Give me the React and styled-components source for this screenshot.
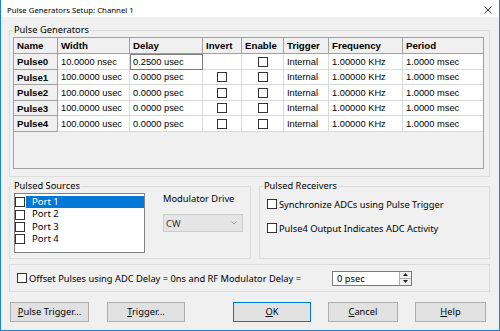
import React from "react";
import styled, { createGlobalStyle } from "styled-components";

const UI_FONT = `"Noto Sans", "Open Sans", sans-serif`;
const GRID_FONT = `"Liberation Sans", Arial, sans-serif`;

const GlobalStyle = createGlobalStyle`
  html, body { margin: 0; padding: 0; background: #f0f0f0; }
  body { width: 500px; height: 331px; overflow: hidden; }
  * { box-sizing: border-box; }
`;

const Window = styled.div`
  width: 500px;
  height: 331px;
  border: 1px solid #1883d7;
  border-top: none;
  background: #f0f0f0;
  display: flex;
  flex-direction: column;
  font-family: ${UI_FONT};
  font-size: 9.3px;
  color: #000;
  overflow: hidden;
`;

const TitleBar = styled.div`
  flex: 0 0 17px;
  height: 17px;
  background: #fff;
  display: flex;
  align-items: center;
  justify-content: space-between;
  padding: 3px 7px 0 6px;
  font-size: 7.8px;
  line-height: 10px;
`;

const Body = styled.div`
  flex: 1;
  display: flex;
  flex-direction: column;
  padding: 7px 9px 0 8px;
`;

const Group = styled.fieldset`
  margin: 0;
  padding: 0;
  border: 1px solid #dcdcdc;
  min-width: 0;
  width: ${(p) => (p.$width ? `${p.$width}px` : "auto")};
  flex: ${(p) => (p.$grow ? "1 1 auto" : "0 0 auto")};
`;

const Legend = styled.legend`
  margin-left: 3px;
  padding: 0 1px;
  line-height: 12px;
  font-size: 9.3px;
`;

const GenContent = styled.div`
  padding: 1px 5px 7px 3px;
`;

const Grid = styled.div`
  display: grid;
  grid-template-columns: 44px 72px 73px 39px 42px 45px 74px 1fr;
  grid-template-rows: 16px 16px 15px 16px 15px 16px;
  align-content: start;
  height: 132px;
  border: 1px solid #a0a0a0;
  background: #f0f0f0;
  font-family: ${GRID_FONT};
  font-size: 9.3px;
`;

const HeadCell = styled.div`
  background: #f0f0f0;
  border-right: ${(p) => (p.$last ? "none" : "1px solid #a0a0a0")};
  border-bottom: 1px solid #a0a0a0;
  font-weight: bold;
  font-size: 9.7px;
  display: flex;
  align-items: center;
  padding-left: 3px;
  white-space: nowrap;
  overflow: hidden;
`;

const DataCell = styled.div`
  background: #fff;
  border-right: ${(p) => (p.$last ? "none" : "1px solid #dadada")};
  border-bottom: 1px solid #dadada;
  display: flex;
  align-items: center;
  justify-content: ${(p) => (p.$center ? "center" : "flex-start")};
  padding-left: ${(p) => (p.$center ? "0" : "3px")};
  white-space: nowrap;
  overflow: hidden;
`;

const EditCell = styled.div`
  background: #fff;
  border: 1px solid #7a7a7a;
  display: flex;
  align-items: center;
  padding-left: 2px;
  white-space: nowrap;
`;

const Box = styled.span`
  display: inline-block;
  flex: 0 0 auto;
  width: ${(p) => p.$size || 10}px;
  height: ${(p) => p.$size || 10}px;
  border: 1px solid #333;
  background: #fff;
`;

const MiddleRow = styled.div`
  display: flex;
  gap: 8px;
  margin-top: 3px;
`;

const SourcesContent = styled.div`
  display: flex;
  padding: 1px 0 5px 4px;
`;

const ListBox = styled.div`
  width: 131px;
  height: 60px;
  border: 1px solid #828282;
  background: #fff;
  padding-top: 2px;
  font-size: 9.5px;
`;

const ListItem = styled.div`
  display: flex;
  align-items: center;
  height: 12.4px;
`;

const ItemLabel = styled.span`
  flex: 1;
  margin-left: 1px;
  height: 12.4px;
  line-height: 12.4px;
  padding-left: 6px;
  background: ${(p) => (p.$selected ? "#0078d7" : "transparent")};
  color: ${(p) => (p.$selected ? "#fff" : "#000")};
`;

const ModColumn = styled.div`
  display: flex;
  flex-direction: column;
  margin-left: 18px;
`;

const FieldLabel = styled.div`
  line-height: 12px;
`;

const Combo = styled.div`
  margin-top: 9px;
  width: 80px;
  height: 18px;
  border: 1px solid #cccccc;
  background: #e5e5e5;
  color: #333;
  display: flex;
  align-items: center;
  justify-content: space-between;
  padding: 0 5px 0 2px;
`;

const Chevron = () => (
  <svg width="6" height="4" viewBox="0 0 6 4">
    <path d="M0.5 0.5 L3 3 L5.5 0.5" stroke="#9a9a9a" strokeWidth="0.9" fill="none" />
  </svg>
);

const ReceiversContent = styled.div`
  display: flex;
  flex-direction: column;
  gap: 12px;
  padding: 6px 0 0 7px;
`;

const CheckRow = styled.label`
  display: flex;
  align-items: center;
  height: 12px;
  gap: 2px;
  white-space: nowrap;
`;

const OffsetPanel = styled.div`
  margin-top: 5px;
  height: 28px;
  border: 1px solid #dcdcdc;
  display: flex;
  align-items: center;
  padding-left: 7px;
`;

const OffsetLabel = styled.span`
  width: 303px;
  margin-left: 2px;
  white-space: nowrap;
`;

const SpinBox = styled.div`
  display: flex;
  width: 80px;
  height: 15px;
  border: 1px solid #7a7a7a;
  background: #fff;
`;

const SpinText = styled.div`
  flex: 1;
  padding-left: 4px;
  display: flex;
  align-items: center;
`;

const SpinButtons = styled.div`
  width: 12px;
  display: flex;
  flex-direction: column;
  border-left: 1px solid #adadad;
`;

const SpinButton = styled.div`
  flex: 1;
  background: #f0f0f0;
  border-top: ${(p) => (p.$down ? "1px solid #adadad" : "none")};
  display: flex;
  align-items: center;
  justify-content: center;
`;

const Arrow = ({ down }) => (
  <svg width="5" height="3" viewBox="0 0 5 3">
    <path d={down ? "M0 0 L5 0 L2.5 3 Z" : "M0 3 L5 3 L2.5 0 Z"} fill="#222" />
  </svg>
);

const ButtonRow = styled.div`
  margin-top: 10px;
  height: 20px;
  display: flex;
  justify-content: space-between;
  padding: 0 4px 0 1px;
`;

const ButtonGroup = styled.div`
  display: flex;
  gap: ${(p) => p.$gap}px;
`;

const Button = styled.button`
  width: ${(p) => p.$w}px;
  height: 20px;
  margin: 0;
  padding: 0;
  background: #e1e1e1;
  border: 1px solid ${(p) => (p.$default ? "#0078d7" : "#adadad")};
  font-family: ${UI_FONT};
  font-size: 9.3px;
  color: #000;
  line-height: 18px;
`;

const CloseIcon = () => (
  <svg width="8" height="8" viewBox="0 0 8 8">
    <path d="M0.5 0.5 L7.5 7.5 M7.5 0.5 L0.5 7.5" stroke="#222" strokeWidth="0.9" fill="none" />
  </svg>
);

const columns = ["Name", "Width", "Delay", "Invert", "Enable", "Trigger", "Frequency", "Period"];

const rows = [
  { name: "Pulse0", width: "10.0000 nsec", delay: "0.2500 usec", invert: false, editing: true },
  { name: "Pulse1", width: "100.0000 usec", delay: "0.0000 psec", invert: true },
  { name: "Pulse2", width: "100.0000 usec", delay: "0.0000 psec", invert: true },
  { name: "Pulse3", width: "100.0000 usec", delay: "0.0000 psec", invert: true },
  { name: "Pulse4", width: "100.0000 usec", delay: "0.0000 psec", invert: true },
];

const ports = ["Port 1", "Port 2", "Port 3", "Port 4"];

export default function App() {
  return (
    <>
      <GlobalStyle />
      <Window>
        <TitleBar>
          <span>Pulse Generators Setup: Channel 1</span>
          <CloseIcon />
        </TitleBar>
        <Body>
          <Group>
            <Legend>Pulse Generators</Legend>
            <GenContent>
              <Grid>
                {columns.map((c, i) => (
                  <HeadCell key={c} $last={i === columns.length - 1}>
                    {c}
                  </HeadCell>
                ))}
                {rows.map((r) => (
                  <React.Fragment key={r.name}>
                    <HeadCell>{r.name}</HeadCell>
                    <DataCell>{r.width}</DataCell>
                    {r.editing ? <EditCell>{r.delay}</EditCell> : <DataCell>{r.delay}</DataCell>}
                    <DataCell $center>{r.invert && <Box />}</DataCell>
                    <DataCell $center>
                      <Box />
                    </DataCell>
                    <DataCell>Internal</DataCell>
                    <DataCell>1.00000 KHz</DataCell>
                    <DataCell $last>1.0000 msec</DataCell>
                  </React.Fragment>
                ))}
              </Grid>
            </GenContent>
          </Group>

          <MiddleRow>
            <Group $width={242}>
              <Legend>Pulsed Sources</Legend>
              <SourcesContent>
                <ListBox>
                  {ports.map((p, i) => (
                    <ListItem key={p}>
                      <Box />
                      <ItemLabel $selected={i === 0}>{p}</ItemLabel>
                    </ListItem>
                  ))}
                </ListBox>
                <ModColumn>
                  <FieldLabel>Modulator Drive</FieldLabel>
                  <Combo>
                    <span>CW</span>
                    <Chevron />
                  </Combo>
                </ModColumn>
              </SourcesContent>
            </Group>
            <Group $grow>
              <Legend>Pulsed Receivers</Legend>
              <ReceiversContent>
                <CheckRow>
                  <Box />
                  <span>Synchronize ADCs using Pulse Trigger</span>
                </CheckRow>
                <CheckRow>
                  <Box />
                  <span>Pulse4 Output Indicates ADC Activity</span>
                </CheckRow>
              </ReceiversContent>
            </Group>
          </MiddleRow>

          <OffsetPanel>
            <Box />
            <OffsetLabel>Offset Pulses using ADC Delay = 0ns and RF Modulator Delay =</OffsetLabel>
            <SpinBox>
              <SpinText>0 psec</SpinText>
              <SpinButtons>
                <SpinButton>
                  <Arrow />
                </SpinButton>
                <SpinButton $down>
                  <Arrow down />
                </SpinButton>
              </SpinButtons>
            </SpinBox>
          </OffsetPanel>

          <ButtonRow>
            <ButtonGroup $gap={18}>
              <Button $w={79}>
                <u>P</u>ulse Trigger...
              </Button>
              <Button $w={78}>
                <u>T</u>rigger...
              </Button>
            </ButtonGroup>
            <ButtonGroup $gap={17}>
              <Button $w={78} $default>
                <u>O</u>K
              </Button>
              <Button $w={70}>
                <u>C</u>ancel
              </Button>
              <Button $w={71}>
                <u>H</u>elp
              </Button>
            </ButtonGroup>
          </ButtonRow>
        </Body>
      </Window>
    </>
  );
}
